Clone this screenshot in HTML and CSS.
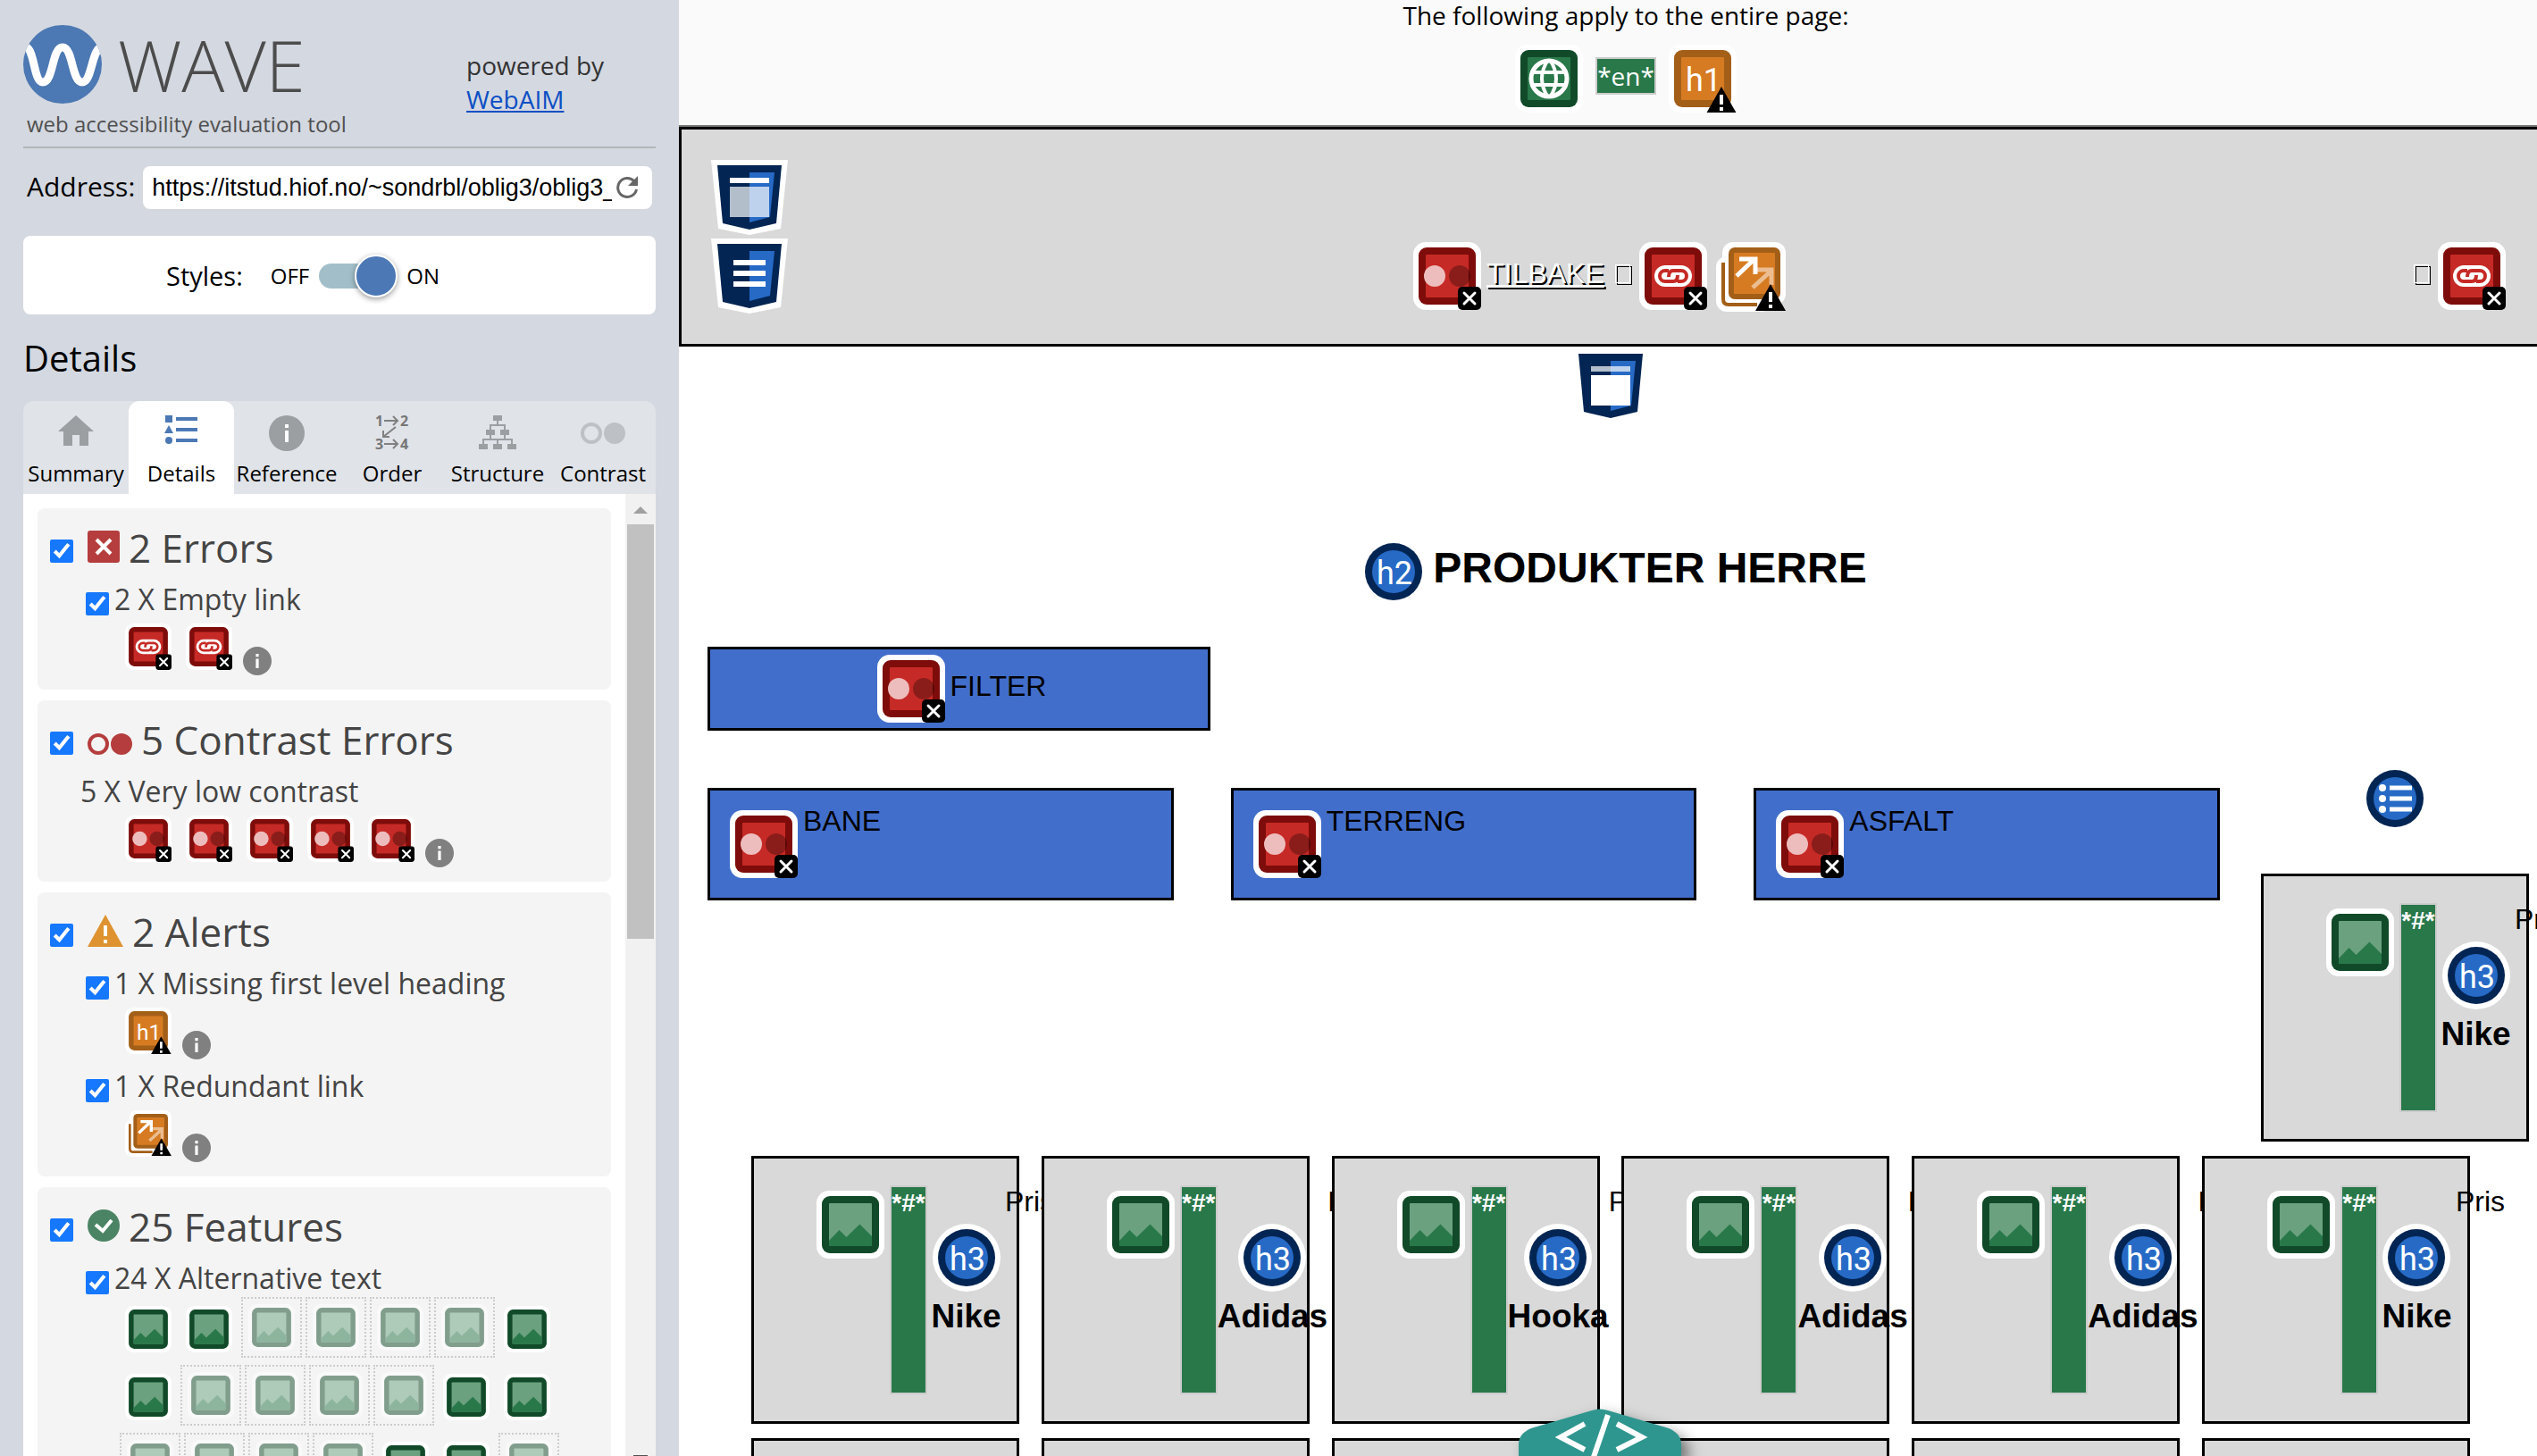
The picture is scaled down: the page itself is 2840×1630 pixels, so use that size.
FILE: index.html
```html
<!DOCTYPE html>
<html lang="en">
<head>
<meta charset="utf-8">
<title>WAVE Web Accessibility Evaluation Tool</title>
<link rel="stylesheet" href="styles.css">
</head>
<body>
<svg class="defs" aria-hidden="true">
  <symbol id="badge-x" viewBox="0 0 26 26"><rect width="26" height="26" rx="5"/><path d="M7 7l12 12M19 7L7 19" stroke="#fff" stroke-width="3" stroke-linecap="round"/></symbol>
  <symbol id="badge-alert" viewBox="0 0 34 30"><path d="M17 0L34 30H0Z"/><path d="M17 9v11M17 23v4" stroke="#fff" stroke-width="4"/></symbol>
  <symbol id="contrast" viewBox="0 0 76 76"><rect width="76" height="76" rx="14" fill="#fff"/><rect x="6" y="6" width="64" height="64" rx="9" fill="#7d0c0a"/><rect x="14" y="14" width="48" height="48" rx="1" fill="#c62a26"/><circle cx="24" cy="38" r="12" fill="#edbdbd"/><circle cx="52" cy="38" r="12" fill="#000" opacity=".3"/><use href="#badge-x" x="50" y="50" width="26" height="26"/></symbol>
  <symbol id="link" viewBox="0 0 76 76"><rect width="76" height="76" rx="14" fill="#fff"/><rect x="6" y="6" width="64" height="64" rx="9" fill="#7d0c0a"/><rect x="14" y="14" width="48" height="48" rx="1" fill="#c62a26"/><rect x="17" y="26" width="42" height="24" rx="12" fill="#fff"/><path d="M33 32H29a6 6 0 0 0 0 12H38q5 0 5-7M43 44H47a6 6 0 0 0 0-12H38q-5 0-5 7" fill="none" stroke="#c62a26" stroke-width="4"/><use href="#badge-x" x="50" y="50" width="26" height="26"/></symbol>
  <symbol id="h1" viewBox="0 0 76 76"><rect width="76" height="76" rx="14" fill="#fff"/><rect x="6" y="6" width="64" height="64" rx="9" fill="#a35f18"/><rect x="14" y="14" width="48" height="48" rx="1" fill="#d67b22"/><text class="glyph" x="39" y="52">h1</text><use href="#badge-alert" x="42" y="47" width="34" height="30"/></symbol>
  <symbol id="redundant" viewBox="0 0 78 78"><rect y="16" width="62" height="62" rx="12" fill="#fff"/><rect x="7" width="71" height="70" rx="12" fill="#fff"/><path d="M8 23V64Q8 70 14 70H46" fill="none" stroke="#a35f18" stroke-width="4"/><rect x="14" y="6" width="58" height="58" rx="7" fill="#a35f18"/><rect x="20" y="12" width="46" height="46" rx="1" fill="#d67b22"/><g fill="none" stroke="#fff" stroke-width="5"><path d="M23 38L43 19M26 19H44V36"/><path d="M41 51L62 32M46 31H62V48" opacity=".5"/></g><use href="#badge-alert" x="44" y="47" width="34" height="30"/></symbol>
  <symbol id="globe" viewBox="0 0 76 76"><rect width="76" height="76" rx="14" fill="#fff"/><rect x="6" y="6" width="64" height="64" rx="9" fill="#114a29"/><rect x="14" y="14" width="48" height="48" rx="1" fill="#29784a"/><g fill="none" stroke="#fff"><circle cx="38" cy="38" r="20" stroke-width="5"/><path d="M37 17Q23 38 37 59M39 17Q53 38 39 59M19 31H57M19 45H57" stroke-width="4"/></g></symbol>
  <symbol id="image" viewBox="0 0 76 76"><rect width="76" height="76" rx="14" fill="#fff"/><rect x="6" y="6" width="64" height="64" rx="9" fill="#114a29"/><rect x="14" y="14" width="48" height="48" rx="1" fill="#6ba17f"/><path d="M14 56L25.500 44L33.500 52L48.500 37.500L62 51V62H14Z" fill="#29784a"/></symbol>
  <symbol id="disc" viewBox="0 0 76 76"><circle cx="38" cy="38" r="38" fill="#fff"/><circle cx="38" cy="38" r="32" fill="#032553"/><circle cx="38" cy="38" r="24" fill="#266ac6"/></symbol>
  <symbol id="h2" viewBox="0 0 76 76"><use href="#disc"/><text class="glyph" x="39" y="52">h2</text></symbol>
  <symbol id="h3" viewBox="0 0 76 76"><use href="#disc"/><text class="glyph" x="39" y="52">h3</text></symbol>
  <symbol id="list" viewBox="0 0 76 76"><use href="#disc"/><g fill="#fff"><circle cx="24" cy="26" r="4"/><circle cx="24" cy="38" r="4"/><circle cx="24" cy="50" r="4"/></g><path d="M32 26H57M32 38H57M32 50H57" stroke="#fff" stroke-width="5"/></symbol>
  <symbol id="shield" viewBox="0 0 86 84"><path d="M0 0H86L78 77L43 84L8 77Z" fill="#fff"/><path d="M7 6H79L73 71L43 78L13 71Z" fill="#032553"/><path d="M43 14H71L66 64L43 70Z" fill="#266ac6"/></symbol>
  <symbol id="shield-header" viewBox="0 0 86 84"><use href="#shield"/><path d="M21 20H65V26H21Z" fill="#fff"/><path d="M21 30H65V64H21Z" fill="#fff" opacity=".7"/></symbol>
  <symbol id="shield-nav" viewBox="0 0 86 84"><use href="#shield"/><path d="M25 24H61V30H25ZM25 36H61V42H25ZM25 48H61V54H25Z" fill="#fff"/></symbol>
  <symbol id="shield-main" viewBox="0 0 86 84"><use href="#shield"/><path d="M21 20H65V26H21Z" fill="#fff" opacity=".7"/><path d="M21 30H65V64H21Z" fill="#fff"/></symbol>
  <symbol id="info" viewBox="0 0 40 40"><circle cx="20" cy="20" r="20"/><path d="M18 10h4v4h-4zM18 17h4v13h-4z" fill="#fff"/></symbol>
</svg>

<aside class="sidebar">
  <header class="brand">
    <div>
      <div class="logo">
        <svg width="88" height="88" viewBox="0 0 88 88"><circle cx="44" cy="44" r="44" fill="#4c78b3"/><clipPath id="c"><circle cx="44" cy="44" r="44"/></clipPath><path clip-path="url(#c)" d="M-2 25C14 18 10 64 22 64C34 64 32 25 44 25C56 25 54 64 66 64C78 64 76 22 90 25" fill="none" stroke="#fff" stroke-width="9"/></svg>
        <span class="wordmark">WAVE</span>
      </div>
      <p class="tagline">web accessibility evaluation tool</p>
    </div>
    <p class="powered">powered by<br><a href="#webaim">WebAIM</a></p>
  </header>

  <form class="address">
    <label for="url">Address:</label>
    <div class="field">
      <input id="url" type="text" value="https://itstud.hiof.no/~sondrbl/oblig3/oblig3_">
      <button type="button" aria-label="Reload"><svg width="26" height="26" viewBox="0 0 26 26"><path d="M21 6A10.500 10.500 0 1 0 23.500 15" fill="none" stroke="#666" stroke-width="3"/><path d="M25 0V11H14Z" fill="#666"/></svg></button>
    </div>
  </form>

  <div class="styles">
    <label class="styles-label" for="styles">Styles:</label>
    <span class="off">OFF</span>
    <input class="switch" id="styles" type="checkbox" role="switch" checked>
    <span>ON</span>
  </div>

  <h1 class="title">Details</h1>

  <nav class="tabs">
    <button type="button" class="tab"><svg width="40" height="40" viewBox="0 0 40 40"><path d="M20 0L40 18H34V34H24V22H16V34H6V18H0Z"/></svg>Summary</button>
    <button type="button" class="tab active"><svg width="40" height="40" viewBox="0 0 40 40"><path d="M2 0H10V8H2ZM6 11L11 20H1ZM14 2H38V6H14ZM14 14H38V18H14ZM14 26H38V30H14Z"/><circle cx="6" cy="28" r="4"/></svg>Details</button>
    <button type="button" class="tab"><svg width="40" height="40"><use href="#info"/></svg>Reference</button>
    <button type="button" class="tab order"><svg width="40" height="40" viewBox="0 0 40 40"><text x="1" y="12">1</text><text x="29" y="12">2</text><text x="1" y="38">3</text><text x="29" y="38">4</text><path d="M11 6H26M21 1L26 6L21 11M11 32H26M21 27L26 32L21 37M24 13L10 24M10 17V24H17" fill="none" stroke="#808080" stroke-width="2"/></svg>Order</button>
    <button type="button" class="tab"><svg width="42" height="40" viewBox="0 0 42 40"><path d="M16 0H26V6H16ZM8 16H18V22H8ZM24 16H34V22H24ZM0 32H10V38H0ZM16 32H26V38H16ZM32 32H42V38H32Z"/><path d="M21 5V11M13 17V11H29V17M13 21V27M29 21V27M5 33V27H37V33M21 33V27" fill="none" stroke="#9b9fa2" stroke-width="2"/></svg>Structure</button>
    <button type="button" class="tab contrast-tab"><svg width="50" height="40" viewBox="0 0 50 40"><circle cx="12" cy="20" r="10" fill="none" stroke="#bdc1c6" stroke-width="4"/><circle cx="38" cy="20" r="12"/></svg>Contrast</button>
  </nav>

  <div class="panel">
    <div class="cards">
      <section class="card">
        <h2><input type="checkbox" checked aria-label="Errors"><svg width="36" height="36" viewBox="0 0 36 36"><rect width="36" height="36" rx="3" fill="#b53d3d"/><path d="M10 10L26 26M26 10L10 26" stroke="#fff" stroke-width="4"/></svg>2 Errors</h2>
        <label class="type"><input type="checkbox" checked>2 X Empty link</label>
        <div class="items"><svg><use href="#link"/></svg><svg><use href="#link"/></svg><svg class="info"><use href="#info"/></svg></div>
      </section>
      <section class="card">
        <h2><input type="checkbox" checked aria-label="Contrast Errors"><svg width="50" height="24" viewBox="0 0 50 24"><circle cx="12" cy="12" r="10" fill="none" stroke="#b53d3d" stroke-width="4"/><circle cx="38" cy="12" r="12" fill="#b53d3d"/></svg>5 Contrast Errors</h2>
        <p class="type plain">5 X Very low contrast</p>
        <div class="items"><svg><use href="#contrast"/></svg><svg><use href="#contrast"/></svg><svg><use href="#contrast"/></svg><svg><use href="#contrast"/></svg><svg><use href="#contrast"/></svg><svg class="info"><use href="#info"/></svg></div>
      </section>
      <section class="card">
        <h2><input type="checkbox" checked aria-label="Alerts"><svg width="40" height="36" viewBox="0 0 40 36"><path d="M20 0L40 36H0Z" fill="#de9330"/><path d="M20 12V24M20 28V32" stroke="#fff" stroke-width="4"/></svg>2 Alerts</h2>
        <label class="type"><input type="checkbox" checked>1 X Missing first level heading</label>
        <div class="items"><svg><use href="#h1"/></svg><svg class="info"><use href="#info"/></svg></div>
        <label class="type"><input type="checkbox" checked>1 X Redundant link</label>
        <div class="items"><svg><use href="#redundant"/></svg><svg class="info"><use href="#info"/></svg></div>
      </section>
      <section class="card">
        <h2><input type="checkbox" checked aria-label="Features"><svg width="36" height="36" viewBox="0 0 36 36"><circle cx="18" cy="18" r="18" fill="#4b8464"/><path d="M9 17L17 24L27 12" fill="none" stroke="#fff" stroke-width="4"/></svg>25 Features</h2>
        <label class="type"><input type="checkbox" checked>24 X Alternative text</label>
        <div class="gallery">
          <div class="line"><i><svg><use href="#image"/></svg></i><i><svg><use href="#image"/></svg></i><i class="dim"><svg><use href="#image"/></svg></i><i class="dim"><svg><use href="#image"/></svg></i><i class="dim"><svg><use href="#image"/></svg></i><i class="dim"><svg><use href="#image"/></svg></i><i><svg><use href="#image"/></svg></i></div>
          <div class="line"><i><svg><use href="#image"/></svg></i><i class="dim"><svg><use href="#image"/></svg></i><i class="dim"><svg><use href="#image"/></svg></i><i class="dim"><svg><use href="#image"/></svg></i><i class="dim"><svg><use href="#image"/></svg></i><i><svg><use href="#image"/></svg></i><i><svg><use href="#image"/></svg></i></div>
          <div class="line"><i class="dim"><svg><use href="#image"/></svg></i><i class="dim"><svg><use href="#image"/></svg></i><i class="dim"><svg><use href="#image"/></svg></i><i class="dim"><svg><use href="#image"/></svg></i><i><svg><use href="#image"/></svg></i><i><svg><use href="#image"/></svg></i><i class="dim"><svg><use href="#image"/></svg></i></div>
        </div>
      </section>
    </div>
    <div class="scrollbar">
      <div class="arrow"><svg width="16" height="8" viewBox="0 0 16 8"><path d="M8 0L16 8H0Z" fill="#a0a0a0"/></svg></div>
      <div class="thumb"></div>
      <div class="arrow-down"></div>
    </div>
  </div>
</aside>

<main class="page">
  <div class="note">
    <p>The following apply to the entire page:</p>
    <div class="note-icons">
      <svg class="icon"><use href="#globe"/></svg><span class="lang">*en*</span><svg class="icon"><use href="#h1"/></svg>
    </div>
  </div>

  <div class="site">
    <header class="banner">
      <div class="shields"><svg class="shield"><use href="#shield-header"/></svg><svg class="shield"><use href="#shield-nav"/></svg></div>
      <nav class="back">
        <svg class="icon"><use href="#contrast"/></svg><a class="tilbake" href="#back">TILBAKE</a><span class="tofu"></span><svg class="icon"><use href="#link"/></svg><svg class="icon wide"><use href="#redundant"/></svg>
      </nav>
      <nav class="end"><span class="tofu"></span><svg class="icon"><use href="#link"/></svg></nav>
    </header>

    <svg class="shield main-mark"><use href="#shield-main"/></svg>

    <h2 class="heading"><svg class="icon"><use href="#h2"/></svg><span>PRODUKTER HERRE</span></h2>

    <div class="shop">
      <div class="filters">
        <button type="button" class="filter"><svg class="icon"><use href="#contrast"/></svg><span>FILTER</span></button>
        <div class="choices">
          <div class="choice"><svg class="icon"><use href="#contrast"/></svg>BANE</div>
          <div class="choice"><svg class="icon"><use href="#contrast"/></svg>TERRENG</div>
          <div class="choice"><svg class="icon"><use href="#contrast"/></svg>ASFALT</div>
        </div>
      </div>
      <div class="first">
        <svg class="icon"><use href="#list"/></svg>
        <article class="product"><svg class="icon"><use href="#image"/></svg><span class="alt">*#*</span><h3><svg class="icon"><use href="#h3"/></svg>Nike</h3><span>Pris</span></article>
      </div>
    </div>

    <div class="products">
      <article class="product"><svg class="icon"><use href="#image"/></svg><span class="alt">*#*</span><h3><svg class="icon"><use href="#h3"/></svg>Nike</h3><span>Pris</span></article>
      <article class="product"><svg class="icon"><use href="#image"/></svg><span class="alt">*#*</span><h3><svg class="icon"><use href="#h3"/></svg>Adidas</h3><span>Pris</span></article>
      <article class="product"><svg class="icon"><use href="#image"/></svg><span class="alt">*#*</span><h3><svg class="icon"><use href="#h3"/></svg>Hooka</h3><span>Pris</span></article>
      <article class="product"><svg class="icon"><use href="#image"/></svg><span class="alt">*#*</span><h3><svg class="icon"><use href="#h3"/></svg>Adidas</h3><span>Pris</span></article>
      <article class="product"><svg class="icon"><use href="#image"/></svg><span class="alt">*#*</span><h3><svg class="icon"><use href="#h3"/></svg>Adidas</h3><span>Pris</span></article>
      <article class="product"><svg class="icon"><use href="#image"/></svg><span class="alt">*#*</span><h3><svg class="icon"><use href="#h3"/></svg>Nike</h3><span>Pris</span></article>
      <article class="product"></article><article class="product"></article><article class="product"></article><article class="product"></article><article class="product"></article><article class="product"></article>
    </div>
  </div>

  <button type="button" class="code" aria-label="Code"><svg width="182" height="53" viewBox="0 0 182 53"><path d="M0 53V40Q0 28 14 22L82 2Q91 -1 100 2L168 22Q182 28 182 40V53Z" fill="#2f968f"/><path d="M74 17L47 32L74 46M110 17L138 32L110 46M100 7L82 60" fill="none" stroke="#fff" stroke-width="6"/></svg></button>
</main>
</body>
</html>
```
FILE: styles.css
```css
* { box-sizing: border-box; }

body {
  margin: 0;
  height: 100vh;
  overflow: hidden;
  display: grid;
  grid-template-columns: 760px 1fr;
  background: #fff;
  font-family: "Open Sans", "Noto Sans", sans-serif;
  color: #000;
}

h1, h2, h3, p { margin: 0; font-weight: 400; }
button { border: 0; padding: 0; background: none; font: inherit; color: inherit; }
svg { display: block; flex: none; }
input { margin: 0; }
.defs { position: absolute; width: 0; height: 0; }
.glyph { font-family: Roboto, sans-serif; font-size: 36px; font-weight: 400; fill: #fff; text-anchor: middle; }

/* Sidebar */
.sidebar {
  height: 100vh;
  padding: 28px 26px 0;
  display: flex;
  flex-direction: column;
  background: #d4d8e0;
}

.brand {
  display: grid;
  grid-template-columns: 496px 1fr;
  padding-bottom: 9px;
  border-bottom: 2px solid #b1b6b8;
}
.logo { display: flex; align-items: center; gap: 18px; height: 88px; }
.wordmark { font-size: 80px; line-height: 88px; font-weight: 300; color: #4c4c4c; }
.tagline { margin: 7px 0 0 4px; font-size: 24px; line-height: 32px; color: #505050; }
.powered { margin-top: 26px; font-size: 28px; line-height: 38px; color: #333; }
.powered a { color: #0b4fc4; }

.address { display: flex; align-items: center; margin: 20px 4px 0; font-size: 30px; }
.address label { padding-bottom: 3px; }
.field {
  flex: 1;
  margin-left: 9px;
  display: flex;
  align-items: center;
  height: 48px;
  padding: 0 15px 0 10px;
  border-radius: 8px;
  background: #fff;
}
.field input {
  flex: 1;
  min-width: 0;
  margin-right: 4px;
  padding: 0;
  border: 0;
  outline: 0;
  font: 27px "Liberation Sans", Arial, sans-serif;
}

.styles {
  flex: none;
  display: flex;
  align-items: center;
  height: 88px;
  margin-top: 30px;
  padding-left: 160px;
  border-radius: 8px;
  background: #fff;
  font-size: 24px;
}
.styles-label { margin-right: 31px; font-size: 29px; }
.off { margin-right: 11px; }
.switch {
  appearance: none;
  display: flex;
  align-items: center;
  justify-content: flex-end;
  width: 88px;
  height: 28px;
  margin: 6px 10px 4px 0;
  border-radius: 14px;
  background: linear-gradient(90deg, #a2bfc9 68px, transparent 68px);
}
.switch::before {
  content: "";
  width: 44px;
  height: 44px;
  border: 2px solid #fff;
  border-radius: 50%;
  background: #4c78b5;
  box-shadow: 0 2px 6px rgba(0, 0, 0, .4);
}

.title { margin: 22px 0 21px; font-size: 40px; line-height: 54px; }

.tabs {
  flex: none;
  display: grid;
  grid-template-columns: repeat(6, 1fr);
  height: 104px;
  border-radius: 12px 12px 0 0;
  background: #e0e3e8;
}
.tab {
  display: flex;
  flex-direction: column;
  align-items: center;
  gap: 9px;
  padding: 16px 0 7px;
  font-size: 24px;
  line-height: 32px;
  white-space: nowrap;
}
.tab svg { fill: #9b9fa2; }
.tab.active { border-radius: 12px 12px 0 0; background: #fff; }
.tab.active svg { fill: #4c78b5; }
.contrast-tab svg { fill: #bdc1c6; }
.order text { font-size: 16px; font-weight: 700; fill: #777; }

.panel { flex: 1; min-height: 0; display: flex; background: #fff; overflow: hidden; }
.cards { flex: 1; display: flex; flex-direction: column; gap: 12px; padding: 16px; }
.card { flex: none; padding: 15px 14px 16px; border-radius: 8px; background: #f4f4f4; color: #444; }
.card input { flex: none; width: 26px; height: 26px; accent-color: #1677ff; }
.card h2 { display: flex; align-items: baseline; font-size: 44px; line-height: 58px; }
.card h2 svg { margin: 0 10px 0 16px; }
.type { display: flex; align-items: center; gap: 6px; margin: 7px 0 0 40px; font-size: 32px; line-height: 43px; }
.type input { margin-top: 11px; }
.items + .type { margin-top: 8px; }
.plain { margin-left: 34px; }
.items { display: flex; gap: 16px; height: 58px; margin: 6px 0 0 84px; }
.items svg { width: 52px; height: 52px; }
.items .info { align-self: flex-end; width: 32px; height: 32px; margin-left: -4px; fill: #808080; }
.gallery { display: flex; flex-direction: column; gap: 8px; margin-left: 76px; }
.line { display: flex; }
.line i { display: block; width: 68px; height: 68px; padding: 10px 8px; }
.line svg { width: 52px; height: 52px; }
.line .dim { margin: 0 2px; padding: 6px; border: 2px dotted #ccc; }
.dim svg { opacity: .5; }

.scrollbar { width: 34px; display: flex; flex-direction: column; background: #f1f1f1; }
.arrow { display: flex; justify-content: center; height: 34px; padding-top: 14px; }
.thumb { height: 464px; margin: 0 2px; background: #c1c1c1; }
.arrow-down { width: 16px; height: 1px; margin: auto auto 0; background: #505050; }

/* Evaluated page */
.page { height: 100vh; position: relative; overflow: hidden; font-family: "Liberation Sans", Arial, sans-serif; font-size: 32px; line-height: 36px; }
.icon { width: 76px; height: 76px; }
.icon.wide { width: 78px; height: 78px; }
.shield { width: 86px; height: 84px; }

.note {
  padding: 0 0 14px 40px;
  border-bottom: 2px solid #737a73;
  background: #fafafa;
  font-family: "Open Sans", "Noto Sans", sans-serif;
  font-size: 28px;
  line-height: 34px;
  text-align: center;
}
.note-icons { display: flex; align-items: center; justify-content: center; gap: 14px; margin-top: 16px; }
.lang { width: 68px; height: 42px; margin-bottom: 6px; border: 2px solid #ccc; background: #29784a; color: #fff; line-height: 38px; }

.site { margin-right: -6px; }
.banner {
  display: grid;
  grid-template-columns: 1fr auto 1fr;
  height: 246px;
  padding: 34px 38px 0 33px;
  border: 3px solid #000;
  background: #d9d9d9;
}
.shields { display: flex; flex-direction: column; gap: 4px; }
.back, .end { display: flex; align-items: center; height: 76px; margin-top: 92px; }
.back { margin-right: 20px; }
.end { justify-content: flex-end; }
.tilbake { margin: 0 12px 6px 6px; color: #fff; text-shadow: 2px 2px 0 #000; }
.tofu { width: 17px; height: 21px; margin: 0 10px 6px 0; border: 1px solid #fff; filter: drop-shadow(2px 2px 0 #000); }
.wide { margin: 2px 0 0 10px; }
.main-mark { margin: 2px auto 0; }

.heading { display: flex; align-items: center; justify-content: center; gap: 6px; margin-top: 128px; padding-left: 6px; font-size: 48px; line-height: 56px; font-weight: 700; }
.heading span { padding-bottom: 8px; }

.shop { display: flex; gap: 46px; margin: 46px 15px 16px 32px; }
.filters { flex: 1; }
.filter {
  display: flex;
  align-items: center;
  justify-content: center;
  gap: 6px;
  width: 563px;
  height: 94px;
  padding-left: 6px;
  border: 3px solid #000;
  background: #426ecb;
}
.filter span { padding-bottom: 6px; }
.choices { display: grid; grid-template-columns: repeat(3, 1fr); gap: 64px; margin-top: 64px; }
.choice { display: flex; gap: 6px; height: 126px; padding: 16px 22px; border: 3px solid #000; background: #426ecb; }
.choice .icon { margin-top: 6px; }

.first { display: flex; flex-direction: column; align-items: center; gap: 46px; width: 300px; padding-top: 132px; }
.products { display: grid; grid-template-columns: repeat(6, 300px); justify-content: space-between; row-gap: 16px; padding: 0 81px; }
.product {
  display: flex;
  align-items: flex-start;
  width: 300px;
  height: 300px;
  padding: 30px 0 0 70px;
  border: 3px solid #000;
  background: #d9d9d9;
}
.product > * { flex: none; }
.product > .icon { margin: 6px 6px 0 0; }
.alt { width: 42px; height: 234px; border: 2px solid #ccc; background: #29784a; color: #fff; font-size: 28px; font-weight: 700; text-align: center; }
.product h3 { display: flex; flex-direction: column; align-items: center; gap: 6px; min-width: 87px; margin-top: 43px; font-size: 37px; line-height: 44px; font-weight: 700; }

.code { position: absolute; left: 940px; bottom: 0; filter: drop-shadow(8px 8px 8px rgba(0, 0, 0, .5)); }
```
